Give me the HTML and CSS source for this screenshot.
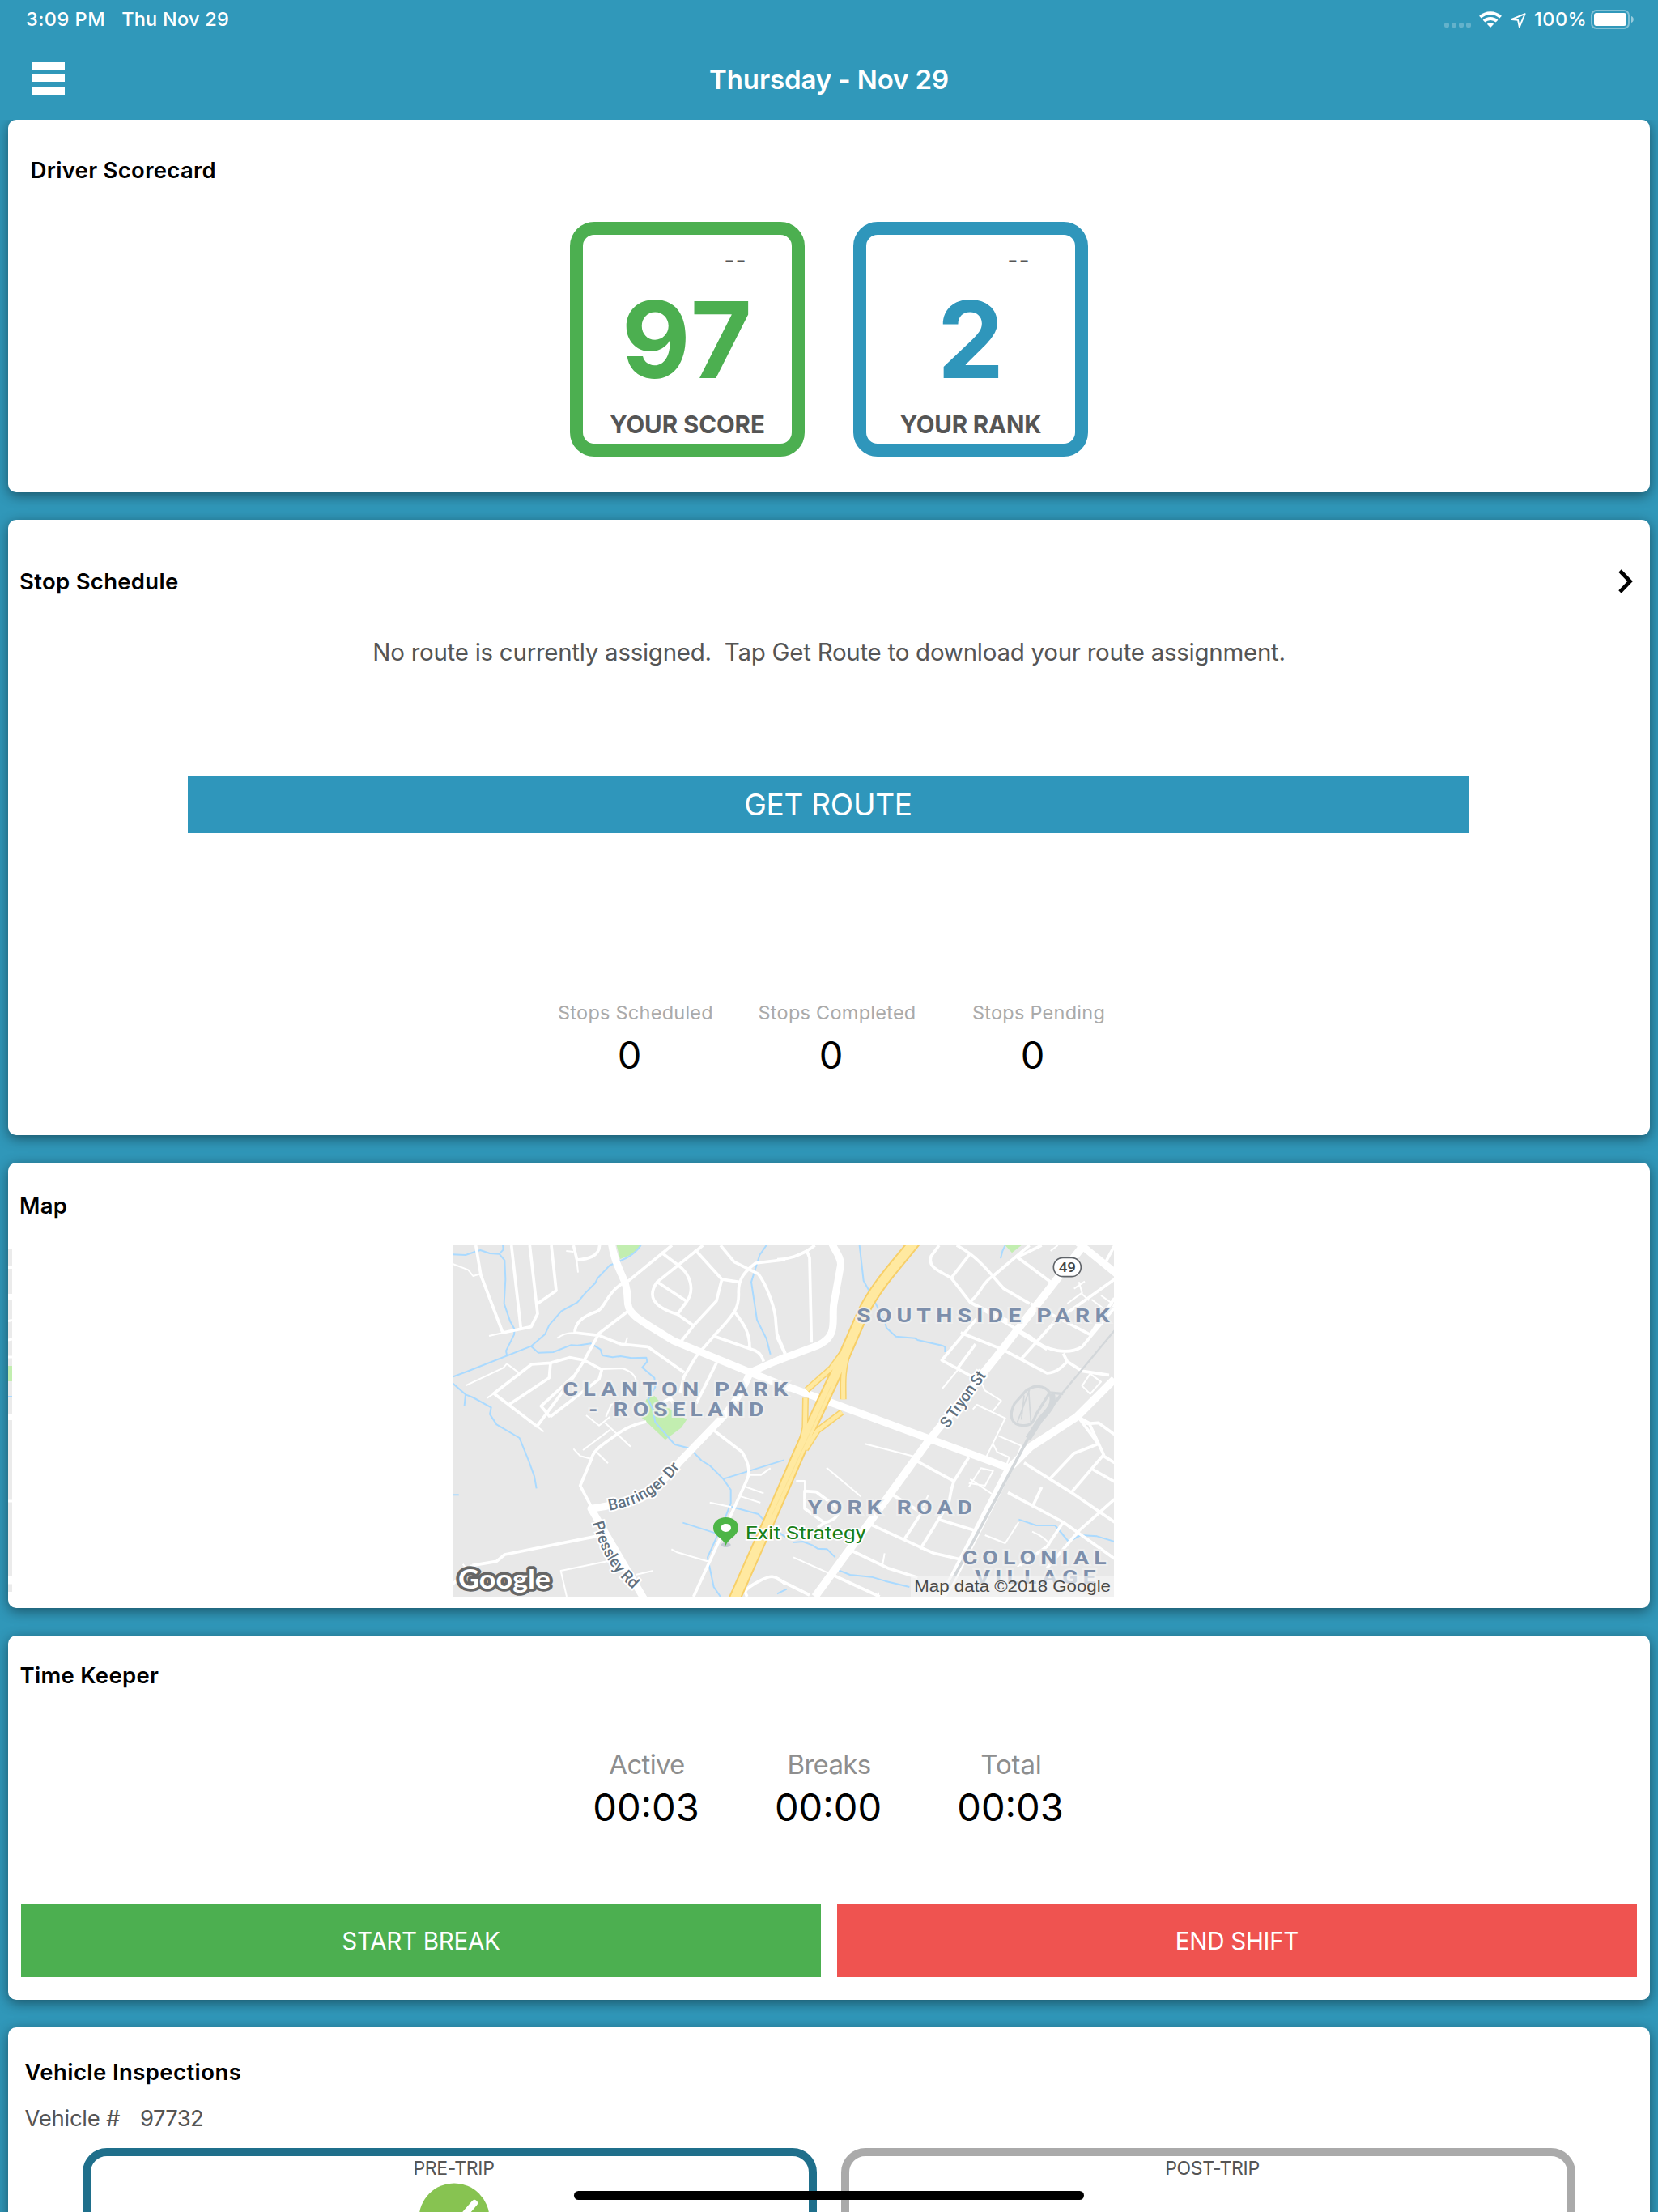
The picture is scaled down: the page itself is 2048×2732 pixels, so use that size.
FILE: index.html
```html
<!DOCTYPE html>
<html lang="en">
<head>
<meta charset="utf-8">
<title>Driver Dashboard</title>
<link rel="stylesheet" href="styles.css">
</head>
<body>
<div class="screen">
  <header class="header">
    <div class="status">
      <span class="status-time">3:09 PM</span>
      <span class="status-date">Thu Nov 29</span>
      <span class="signal"><i></i><i></i><i></i><i></i></span>
      <svg class="wifi" viewBox="0 0 28 20" width="28" height="20">
        <g fill="none" stroke="#fff" stroke-width="3.9">
          <path d="M1.4 7.2A18.4 18.4 0 0 1 26.6 7.2"/>
          <path d="M6 12.2A11.6 11.6 0 0 1 22 12.2"/>
        </g>
        <path d="M14 20L9.8 15.7A6 6 0 0 1 18.2 15.7Z" fill="#fff"/>
      </svg>
      <svg class="location" viewBox="0 0 19 19" width="19" height="19">
        <path d="M17.6 1.2L1.2 8L9 8.800L10.8 17.4Z" fill="none" stroke="#fff" stroke-width="1.9" stroke-linejoin="round"/>
      </svg>
      <span class="status-pct">100%</span>
      <svg class="battery" viewBox="0 0 54 24" width="54" height="24">
        <rect x="1" y="1" width="46" height="22" rx="6" fill="none" stroke="#fff" stroke-opacity=".4" stroke-width="2"/>
        <rect x="4" y="4" width="40" height="16" rx="3" fill="#fff"/>
        <path d="M50 8C53.7 9 53.7 15 50 16Z" fill="#fff" fill-opacity=".5"/>
      </svg>
    </div>
    <div class="nav">
      <div class="menu"><i></i><i></i><i></i></div>
      <h1 class="nav-title">Thursday - Nov 29</h1>
    </div>
  </header>

  <main class="cards">
    <section class="card card-score">
      <h2 class="card-title">Driver Scorecard</h2>
      <div class="scores">
        <div class="score score-green">
          <span class="score-trend">--</span>
          <span class="score-value score-value-wide">97</span>
          <span class="score-label">YOUR SCORE</span>
        </div>
        <div class="score score-blue">
          <span class="score-trend">--</span>
          <span class="score-value">2</span>
          <span class="score-label score-label-rank">YOUR RANK</span>
        </div>
      </div>
    </section>

    <section class="card card-stops">
      <div class="card-head">
        <h2 class="card-title title-stop">Stop Schedule</h2>
        <svg class="chevron" viewBox="0 0 20 32" width="20" height="32"><path d="M3 3L15.5 16L3 29" fill="none" stroke="#000" stroke-width="4.8"/></svg>
      </div>
      <p class="notice">No route is currently assigned.&nbsp; Tap Get Route to download your route assignment.</p>
      <div class="btn btn-route">GET ROUTE</div>
      <div class="stops">
        <div class="stop"><span class="stop-label">Stops Scheduled</span><span class="stop-value">0</span></div>
        <div class="stop"><span class="stop-label">Stops Completed</span><span class="stop-value">0</span></div>
        <div class="stop"><span class="stop-label">Stops Pending</span><span class="stop-value">0</span></div>
      </div>
    </section>

    <section class="card card-map">
      <h2 class="card-title">Map</h2>
      <svg class="map-edge" viewBox="0 0 5 423" width="5" height="423">
        <rect width="5" height="423" fill="#ebebeb"/>
        <path d="M0 22.5H5M0 88.5L5 87.5M0 112L5 111M0 133H5M0 311H5M0 412H5" stroke="#fff" stroke-width="3"/>
        <path d="M0 59H5M0 207H5M0 407H5" stroke="#fff" stroke-width="8"/>
        <rect y="144" width="5" height="19" fill="#c2eeb0"/>
        <path d="M0 182H5" stroke="#aadaff" stroke-width="2"/>
      </svg>
      <svg class="map" viewBox="0 0 2451 1302" width="817" height="434">
        <rect width="2451" height="1302" fill="#e8e8e8"/>
        <!-- west half: parks and creeks -->
        <g transform="translate(-27 -54)">
          <path fill="#c2eeb0" d="M635 54H725L700 85L648 105ZM745 625L775 612L800 640L895 700L875 730L815 775L745 708L725 690Z"/>
          <g fill="none" stroke="#aadaff" stroke-width="6" stroke-linejoin="round">
            <path d="M27 88L75 90L110 78L130 72L165 84L200 86L215 70L213 50M200 86L220 110L223 180L218 270L240 335L257 365L255 385L225 445L228 460"/>
            <path d="M725 54C700 90 670 105 610 128L565 175L555 195L520 230L490 265L430 298L385 350L370 383L318 428L80 522L27 542"/>
            <path d="M318 428L345 452L400 450L465 424L490 425L540 418L575 440L582 462L620 469L650 465L690 472L745 470L748 485L730 507L775 545L778 580L752 625L770 665L778 710L850 792L905 806L950 852L980 870L1030 920L1058 960V1010L1035 1070L972 1210L995 1320L1020 1356"/>
            <path d="M27 565L75 607L103 618L170 655L165 680L190 718L275 768L310 855L330 910L338 955M75 607L71 648M27 979H50M1030 920L1255 850M880 1082L1000 1120M1058 1022L1160 1050L1185 1078L1260 1135"/>
            <path d="M1190 54L1165 90L1134 190L1155 330L1190 400L1205 458"/>
          </g>
          <g fill="none" stroke="#fff" stroke-linejoin="round">
            <g stroke-width="6">
              <path d="M27 123L85 145L103 168L130 160M75 574L215 508L228 493L272 526M162 390L215 378M448 75L475 78M487 108L492 155M415 398C440 380 460 375 485 380M665 425L675 395M155 620L185 600M340 725L365 745M522 684L570 722L610 690M510 813L612 737M592 712L687 800M475 808L500 835L540 845M560 820L603 862M580 513L655 510C690 520 705 535 708 560M595 690L615 645L650 630M980 1007L1060 1024M1110 948L1180 973M1090 983L1168 1008M1130 905L1170 905L1205 880M838 1180L860 1192L972 1225M450 1356L428 1260L600 1225M705 1275L770 1260M65 1235L80 1255"/>
            </g>
            <g stroke-width="11">
              <path d="M113 54L132 165L213 378L318 356L342 308L313 54M245 54L280 362M393 54L411 222L342 270M475 54L488 108C530 105 570 95 572 54"/>
              <path d="M840 54L680 185L650 200C600 230 590 290 560 300S480 330 480 378L570 388L650 420L750 430L885 525M675 300L570 380L515 480L480 535L340 725L180 603L320 495L390 490L460 470L515 480L580 515L570 550L388 690M235 645L385 545L390 490M388 690L355 650L480 535"/>
              <path d="M955 54L785 190C750 240 765 280 860 310L920 352M800 80L860 125C910 160 925 220 895 262L860 310M785 190L895 262M925 70L1025 180L1088 190M1020 54L1070 115L1160 160C1190 200 1225 290 1225 340L1230 395L1260 458M1260 107L1150 120C1110 150 1085 180 1087 230S1080 300 1000 385L930 465L885 540L870 600M1025 180L1005 260L920 352L870 415M1072 300C1100 340 1130 370 1128 440M1000 392L1150 445C1170 455 1175 470 1180 485M1005 490L930 640"/>
              <path d="M995 740L1100 820C1130 870 1130 900 1115 930L920 1356M745 708C680 720 650 745 600 780S545 830 540 850L500 945L545 1030M100 1240L190 1225L220 1200L560 1132M27 1310L100 1240M800 640L835 620L845 640M1260 1310C1220 1270 1200 1280 1170 1295S1110 1330 1112 1340L1118 1356"/>
            </g>
            <path stroke-width="27" d="M615 40C630 150 675 170 675 250C675 310 700 320 850 410L1130 525L1280 585"/>
            <path stroke-width="27" d="M1130 525L1260 468M1130 525C1090 620 1050 670 1010 710L870 855C800 950 700 1010 540 1030L740 1370"/>
          </g>
        </g>
        <!-- east half: parks, rail yard and creeks -->
        <g transform="translate(1203 -54)">
          <path fill="#c2eeb0" d="M845 54H905L870 82Z"/>
          <g fill="none" stroke="#aadaff" stroke-width="6" stroke-linejoin="round">
            <path d="M305 54L320 185L345 230L400 340L405 360L440 392L510 398L520 405L610 425L622 430V450M845 54L835 75L828 103M895 1070L960 1092L1030 1092L1080 1152L1125 1128L1185 1132L1250 1152M60 1155L95 1152L130 1165L150 1178L185 1180L215 1210M228 1258L270 1275L350 1283L400 1298L490 1320M0 1345L35 1328"/>
          </g>
          <g fill="none" stroke="#fff" stroke-linejoin="round">
            <g stroke-width="6">
              <path d="M325 790L520 840M183 878L310 985M70 927H102V970M612 585L670 515M755 560L770 592L830 630L800 668M725 662L740 645L845 695L775 838M820 760L905 797L880 860M800 790L815 820L860 840L850 868L795 845M710 950L755 880L800 890L770 945L710 935M715 920L795 975M60 1210L205 1275M390 1240L398 1195M375 1356V1340M770 1128L845 1158L895 1080M1100 215L1140 188M1118 190L1130 230L1075 270M1130 235L1155 258M1200 240L1250 275L1225 300L1165 255M1130 575L1160 530L1200 560L1160 605ZM1013 75L1040 54M945 1115C980 1130 1000 1145 1010 1165M890 1245L950 1205M560 980L540 1020"/>
            </g>
            <g stroke-width="11">
              <path d="M0 107C50 105 80 90 110 75L140 54M110 75L120 100L127 415M0 385L30 455M600 54L570 95C560 130 580 140 645 175L715 265L940 395C1000 450 1080 460 1130 430L1250 285M715 85L645 175M665 54C750 100 790 160 840 215L935 270M935 54L800 168C760 190 750 240 715 262M890 98L1020 195M980 54L890 98M940 270L1160 385L1250 250M1250 180L1110 280L1035 330L905 475M870 340L715 265M885 370L1000 440M740 325L610 480L740 550M680 378L835 440L1000 528C1040 525 1060 500 1075 485L1060 455M735 420L665 515M1075 485L1130 520L1230 535M1250 55L1218 115"/>
              <path d="M520 855L655 928M710 840L655 928C640 970 640 1000 635 1010L530 1180M430 980L535 1045M915 860L1090 970L1250 1080M1010 920L1100 825L1190 790L1115 690L1155 712L1210 830L1090 970M1115 690L1150 715L1190 712L1250 755M1170 885L1250 930M1210 835L1250 860M855 970L1060 1080L1250 1215M980 950L945 1025M1250 995L1120 1110L1000 1250M1060 1080L1000 1170L900 1240M350 1090L580 1195L690 1220M600 1070L730 1110M470 1145L545 1030M275 1185L410 1250L520 1285M0 1290L120 1350M205 1275L380 1356M102 965L145 968L215 1020C240 1040 225 1070 175 1082L102 1030ZM175 1082L150 1100"/>
            </g>
            <path stroke-width="27" d="M-10 485L150 425C230 390 200 330 210 270L235 130C240 100 210 70 200 40M1110 40L1258 160M40 578L860 880"/>
            <path stroke-width="29" d="M1135 54L810 470L560 780L350 1070L140 1356M1250 550L1110 690L940 800L860 880L650 1290L610 1356"/>
          </g>
          <g fill="none" stroke="#d3d7da">
            <path stroke-width="7" d="M1250 370L1050 610L960 720"/>
            <path stroke-width="11" d="M1050 610L935 760L700 1200L630 1330"/>
            <path stroke-width="10" d="M1060 605L1010 600C990 570 950 570 920 595L880 640C855 690 870 720 910 722S950 700 960 680L1010 600"/>
            <path stroke-width="5" d="M935 590L890 710M932 590L940 710M915 610L905 700"/>
            <path stroke-width="22" d="M1018 605C1030 650 1000 670 975 700L930 770"/>
          </g>
          <g fill="none" stroke-linejoin="round">
            <g stroke="#f7d26e" stroke-width="24">
              <path d="M240 455L200 510L110 590M262 450C240 530 245 560 245 625M105 620L103 730L85 810M240 672L150 740L105 810"/>
            </g>
            <path stroke="#f7cf68" stroke-width="46" d="M510 40C440 130 370 200 320 300L250 460L100 780L-5 1020L-165 1380"/>
            <g stroke="#ffe9a0" stroke-width="15">
              <path d="M240 455L200 510L110 590M262 450C240 530 245 560 245 625M105 620L103 730L85 810M240 672L150 740L105 810"/>
            </g>
            <path stroke="#ffe9a0" stroke-width="34" d="M510 40C440 130 370 200 320 300L250 460L100 780L-5 1020L-165 1380"/>
            <path stroke="#f9e08c" stroke-width="2" d="M200 575L80 840L-20 1055"/>
          </g>
        </g>
        <!-- labels -->
        <g class="map-area" transform="translate(-27 -54)">
          <text x="436" y="613" textLength="852" lengthAdjust="spacingAndGlyphs">CLANTON PARK</text>
          <text x="532" y="686" textLength="666" lengthAdjust="spacingAndGlyphs">- ROSELAND</text>
          <text x="1524" y="340" textLength="956" lengthAdjust="spacingAndGlyphs">SOUTHSIDE PARK</text>
          <text x="1343" y="1050" textLength="628" lengthAdjust="spacingAndGlyphs">YORK ROAD</text>
          <text x="1916" y="1236" textLength="552" lengthAdjust="spacingAndGlyphs">COLONIAL</text>
          <text x="1963" y="1308" textLength="466" lengthAdjust="spacingAndGlyphs">VILLAGE</text>
        </g>
        <g class="map-street" transform="translate(-27 -54)">
          <path id="barringer" fill="none" d="M608 1037C720 1017 810 967 890 850"/>
          <path id="pressley" fill="none" d="M546 1083C573 1170 598 1245 705 1337"/>
          <path id="tryon" fill="none" d="M1862 735L2010 530"/>
          <text textLength="316"><textPath href="#barringer">Barringer Dr</textPath></text>
          <text textLength="292"><textPath href="#pressley">Pressley Rd</textPath></text>
          <text textLength="245"><textPath href="#tryon">S Tryon St</textPath></text>
        </g>
        <g transform="translate(-27 -54)">
          <ellipse cx="1040" cy="1164" rx="18" ry="9" fill="#c3c9d3"/>
          <path d="M1040 1168C1034 1140 993 1132 993 1100C993 1078 1014 1062 1040 1062S1086 1078 1086 1100C1086 1132 1046 1140 1040 1168Z" fill="#4db546"/>
          <ellipse cx="1040" cy="1101" rx="19" ry="15" fill="#fff"/>
          <text class="map-poi" x="1112" y="1142" textLength="446" lengthAdjust="spacingAndGlyphs">Exit Strategy</text>
          <rect x="2254" y="100" width="102" height="70" rx="35" fill="#fff" stroke="#5f6368" stroke-width="5"/>
          <text class="map-shield" x="2273" y="152" textLength="64" lengthAdjust="spacingAndGlyphs">49</text>
          <text class="map-logo" x="48" y="1325" textLength="342" lengthAdjust="spacingAndGlyphs">Google</text>
          <rect x="1725" y="1278" width="753" height="78" fill="#f5f5f5" fill-opacity=".7"/>
          <text class="map-credit" x="1738" y="1338" textLength="728" lengthAdjust="spacingAndGlyphs">Map data ©2018 Google</text>
        </g>
      </svg>
    </section>

    <section class="card card-time">
      <h2 class="card-title">Time Keeper</h2>
      <div class="times">
        <div class="time"><span class="time-label">Active</span><span class="time-value">00:03</span></div>
        <div class="time"><span class="time-label">Breaks</span><span class="time-value">00:00</span></div>
        <div class="time"><span class="time-label time-label-total">Total</span><span class="time-value">00:03</span></div>
      </div>
      <div class="actions">
        <div class="btn btn-break">START BREAK</div>
        <div class="btn btn-end">END SHIFT</div>
      </div>
    </section>

    <section class="card card-vehicle">
      <h2 class="card-title title-vehicle">Vehicle Inspections</h2>
      <div class="vehicle"><span>Vehicle #</span><span class="vehicle-number">97732</span></div>
      <div class="trips">
        <div class="trip trip-pre">
          <span class="trip-label">PRE-TRIP</span>
          <svg class="trip-check" viewBox="0 0 88 88" width="88" height="88">
            <circle cx="44" cy="44" r="43.5" fill="#87c351"/>
            <path d="M22 48L37 62L69 25" fill="none" stroke="#fff" stroke-width="8" stroke-linecap="round"/>
          </svg>
        </div>
        <div class="trip trip-post">
          <span class="trip-label">POST-TRIP</span>
        </div>
      </div>
    </section>
  </main>
  <div class="home-indicator"></div>
</div>
</body>
</html>
```
FILE: styles.css
```css
* {
  box-sizing: border-box;
}

body {
  margin: 0;
  background: #3098ba;
  font-family: Inter, "Liberation Sans", sans-serif;
  color: #000;
}

h1,
h2,
p {
  margin: 0;
}

.screen {
  position: relative;
  width: 2048px;
  height: 2732px;
  overflow: hidden;
  background: #3097b9;
}

/* Header */

.header {
  position: relative;
  z-index: 1;
  height: 148px;
  background: #3098ba;
  color: #fff;
}

.status {
  display: flex;
  align-items: center;
  height: 47px;
  padding: 0 29px 0 32px;
  font-size: 23.5px;
  font-weight: 500;
}

.status-time {
  letter-spacing: 0.5px;
}

.status-date {
  margin-left: 20px;
  letter-spacing: 0.25px;
}

.signal {
  display: flex;
  gap: 3px;
  margin-left: auto;
  margin-top: 15px;
}

.signal i {
  width: 6px;
  height: 6px;
  border-radius: 2px;
  background: rgba(255, 255, 255, 0.25);
}

.wifi {
  margin-left: 10px;
}

.location {
  margin-left: 11px;
  margin-top: 3px;
}

.status-pct {
  width: 64px;
  margin-left: 10px;
  letter-spacing: 0.5px;
}

.battery {
  margin-left: 6px;
}

.nav {
  display: grid;
  grid-template-columns: 200px 1fr 200px;
  align-items: center;
  height: 101px;
}

.menu {
  display: flex;
  flex-direction: column;
  gap: 6.5px;
  margin: -2px 0 0 40px;
}

.menu i {
  width: 40px;
  height: 9px;
  background: #fff;
}

.nav-title {
  font-size: 33px;
  font-weight: 600;
  line-height: 40px;
  letter-spacing: -0.1px;
  text-align: center;
}

/* Cards */

.cards {
  display: flex;
  flex-direction: column;
  gap: 34px;
  padding: 0 10px;
}

.card {
  flex: none;
  border-radius: 10px;
  background: #fff;
  box-shadow: 0 4px 16px rgba(0, 0, 0, 0.45);
}

.card-title {
  font-size: 27.5px;
  font-weight: 600;
  line-height: 34px;
  letter-spacing: 0.3px;
}

.btn {
  color: #fff;
  text-align: center;
}

/* Scorecard */

.card-score {
  height: 460px;
  padding: 45px 0 0 27.5px;
}

.scores {
  display: flex;
  justify-content: center;
  gap: 60px;
  margin: 47px 27.5px 0 0;
}

.score {
  display: flex;
  flex-direction: column;
  width: 290px;
  height: 290px;
  padding-top: 16px;
  border: 16px solid;
  border-radius: 30px;
  text-align: center;
}

.score-green {
  border-color: #4caf50;
  color: #4caf50;
}

.score-blue {
  border-color: #2f96bb;
  color: #2f96bb;
}

.score-trend {
  padding-right: 55px;
  font-size: 27.5px;
  font-weight: 500;
  line-height: 30px;
  letter-spacing: 1.5px;
  text-align: right;
  color: #555;
}

.score-value {
  margin-top: 28.5px;
  font-size: 131px;
  font-weight: 700;
  line-height: 110px;
}

.score-value-wide {
  padding-left: 1px;
  letter-spacing: 2.5px;
}

.score-label {
  margin-top: 32.5px;
  font-size: 29.5px;
  font-weight: 700;
  line-height: 34px;
  letter-spacing: -0.05px;
  color: #555;
}

.score-label-rank {
  letter-spacing: -0.15px;
}

/* Stop schedule */

.card-stops {
  height: 760px;
  padding-top: 59px;
}

.card-head {
  display: flex;
  align-items: center;
  justify-content: space-between;
  height: 34px;
  padding: 0 20px 0 14px;
}

.notice {
  margin-top: 50px;
  font-size: 29.5px;
  line-height: 40px;
  letter-spacing: -0.27px;
  text-align: center;
  color: #555;
}

.btn-route {
  width: 1582px;
  margin: 134px 0 0 222px;
  background: #2f96bb;
  font-size: 37px;
  line-height: 70px;
  letter-spacing: -0.25px;
}

.stops {
  display: grid;
  grid-template-columns: repeat(3, 249px);
  margin: 206.5px 0 0 650.5px;
  text-align: center;
}

.stop {
  display: flex;
  flex-direction: column;
}

.stop-label {
  font-size: 23.5px;
  line-height: 30px;
  letter-spacing: 0.25px;
  color: #aaa;
}

.stop-value {
  margin-top: 12.5px;
  padding-right: 15px;
  font-size: 47px;
  line-height: 50px;
}

/* Map */

.card-map {
  position: relative;
  height: 550px;
  padding: 35.5px 0 0 14px;
}

.map-edge {
  position: absolute;
  left: 0;
  top: 107px;
}

.map {
  display: block;
  margin: 32.5px 0 0 535px;
  font-family: Roboto, sans-serif;
}

.map text {
  paint-order: stroke;
}

.map-area text {
  font-size: 70px;
  font-weight: 700;
  letter-spacing: 15px;
  fill: #7d8fab;
  stroke: #f0f0f0;
  stroke-width: 12px;
  stroke-opacity: 0.85;
}

.map-street text {
  font-size: 58px;
  font-weight: 500;
  fill: #62717f;
  stroke: #fff;
  stroke-width: 12px;
}

.map .map-poi {
  font-size: 66px;
  fill: #188018;
  stroke: #fff;
  stroke-width: 10px;
}

.map-shield {
  font-size: 50px;
  font-weight: 500;
  fill: #444;
}

.map .map-logo {
  font-family: Lato, sans-serif;
  font-size: 98px;
  font-weight: 700;
  fill: #fff;
  stroke: #666;
  stroke-width: 22px;
  stroke-linejoin: round;
}

.map-credit {
  font-family: "Liberation Sans", sans-serif;
  font-size: 58px;
  fill: #4a4a4a;
}

/* Time keeper */

.card-time {
  height: 450px;
  padding: 32px 16px 0;
}

.card-time .card-title {
  margin-left: -1.5px;
}

.times {
  display: grid;
  grid-template-columns: repeat(3, 225px);
  justify-content: center;
  margin-top: 73px;
  text-align: center;
}

.time {
  display: flex;
  flex-direction: column;
}

.time-label {
  font-size: 33px;
  line-height: 40px;
  letter-spacing: -0.7px;
  color: #8e8e8e;
}

.time-label-total {
  letter-spacing: -0.12px;
}

.time-value {
  margin-top: 8px;
  padding-right: 2px;
  font-size: 47px;
  line-height: 50px;
}

.actions {
  display: grid;
  grid-template-columns: 1fr 1fr;
  gap: 20px;
  margin-top: 95px;
  font-size: 29.5px;
  line-height: 90px;
  letter-spacing: -0.28px;
}

.btn-break {
  background: #4caf50;
}

.btn-end {
  background: #ef5350;
}

/* Vehicle inspections */

.card-vehicle {
  height: 460px;
  padding: 38px 0 0 20.5px;
}

.title-vehicle {
  letter-spacing: 0.42px;
}

.vehicle {
  display: flex;
  gap: 25px;
  margin-top: 22.5px;
  font-size: 27.5px;
  line-height: 34px;
  letter-spacing: -0.28px;
  color: #555;
}

.vehicle-number {
  letter-spacing: -0.68px;
}

.trips {
  display: grid;
  grid-template-columns: repeat(2, 907px);
  gap: 30px;
  margin: 20.5px 0 0 71.5px;
}

.trip {
  display: flex;
  flex-direction: column;
  align-items: center;
  height: 300px;
  border: 10px solid;
  border-radius: 30px;
}

.trip-pre {
  border-color: #1f6f8b;
}

.trip-post {
  border-color: #aaa;
}

.trip-label {
  padding-left: 10px;
  font-size: 23px;
  line-height: 30px;
  letter-spacing: -0.33px;
  color: #555;
}

.trip-check {
  margin: 3px 0 0 10px;
}

/* System home indicator */

.home-indicator {
  position: absolute;
  left: 709px;
  top: 2706px;
  width: 630px;
  height: 11px;
  border-radius: 5.5px;
  background: #000;
}
```
